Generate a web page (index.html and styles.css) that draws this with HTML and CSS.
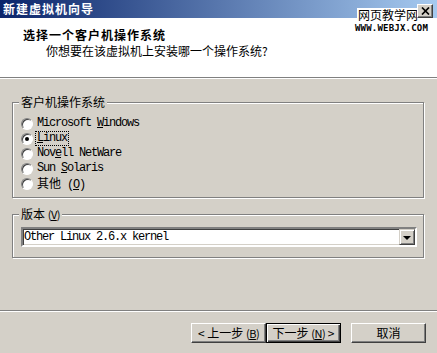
FILE: index.html
```html
<!DOCTYPE html>
<html lang="zh-CN">
<head>
  <meta charset="UTF-8" />
  <title>新建虚拟机向导</title>
  <link rel="stylesheet" href="styles.css">
</head>
<body>

  <div class="titlebar">
    <span class="title">新建虚拟机向导</span>
    <button class="close-btn">
      <svg width="9" height="8" viewBox="0 0 9 8"><path d="M1 0.5 L8 7.5 M8 0.5 L1 7.5" stroke="#000" stroke-width="1.7" fill="none"/></svg>
    </button>
  </div>

  <div class="watermark">
    <div class="wm-name">网页教学网</div>
    <div class="wm-url">WWW.WEBJX.COM</div>
  </div>

  <div class="header">
    <h1>选择一个客户机操作系统</h1>
    <p>你想要在该虚拟机上安装哪一个操作系统?</p>
  </div>

  <div class="main">
    <fieldset class="group">
      <legend>客户机操作系统</legend>
      <div class="opt"><span class="radio"></span><span class="lbl">Microsoft <u>W</u>indows</span></div>
      <div class="opt"><span class="radio checked"></span><span class="lbl focus"><u>L</u>inux</span></div>
      <div class="opt"><span class="radio"></span><span class="lbl">Nov<u>e</u>ll NetWare</span></div>
      <div class="opt"><span class="radio"></span><span class="lbl">Sun <u>S</u>olaris</span></div>
      <div class="opt"><span class="radio"></span><span class="lbl"><span class="cjk">其他</span> (<u>O</u>)</span></div>
    </fieldset>

    <fieldset class="group version">
      <legend>版本 <span class="key">(<u>V</u>)</span></legend>
      <div class="select">
        <span class="value">Other Linux 2.6.x kernel</span>
        <span class="drop"><span class="arrow"></span></span>
      </div>
    </fieldset>
  </div>

  <div class="separator"></div>

  <div class="buttons">
    <button class="btn">&lt; 上一步 <span class="key">(<u>B</u>)</span></button>
    <button class="btn default">下一步 <span class="key">(<u>N</u>)</span> &gt;</button>
    <button class="btn cancel">取消</button>
  </div>

</body>
</html>
```

FILE: styles.css
```css
* { box-sizing: border-box; }
body {
  margin: 0;
  width: 437px;
  height: 353px;
  overflow: hidden;
  position: relative;
  background: #d4d0c8;
  font-family: "Noto Sans CJK SC", sans-serif;
  font-size: 12px;
  color: #000;
}
.titlebar {
  height: 18px;
  display: flex;
  align-items: center;
  padding: 0 4px 0 3px;
  background: linear-gradient(to right, #0a246a, #a6caf0);
}
.title {
  color: #fff;
  font-weight: bold;
  letter-spacing: 1px;
  line-height: 18px;
}
.close-btn {
  margin-left: auto;
  margin-top: 4px;
  width: 16px;
  height: 14px;
  padding: 0;
  display: flex;
  align-items: center;
  justify-content: center;
  background: #d4d0c8;
  border: 1px solid;
  border-color: #fff #404040 #404040 #fff;
  box-shadow: inset -1px -1px #808080;
  position: relative;
  z-index: 2;
}
.watermark {
  position: absolute;
  top: 8px;
  left: 355px;
  width: 73px;
  z-index: 1;
}
.wm-name {
  width: 62px;
  margin-left: 2px;
  background: #fff;
  font-size: 12px;
  line-height: 14px;
  text-align: center;
}
.wm-url {
  margin-top: 1px;
  font-family: "DejaVu Sans Mono", monospace;
  font-weight: bold;
  font-size: 9px;
  line-height: 10px;
  letter-spacing: 0.2px;
}
.header {
  height: 60px;
  background: #fff;
  border-bottom: 1px solid #808080;
  box-shadow: 0 1px 0 #fff;
  padding: 10px 0 0 23px;
}
.header h1 {
  margin: 0;
  font-size: 12px;
  font-weight: bold;
  line-height: 14px;
  letter-spacing: 1px;
}
.header p {
  margin: 2px 0 0 23px;
  line-height: 14px;
}
.main {
  padding: 0 13px 0 12px;
}
.group {
  margin: 17px 0 0;
  padding: 7px 6px 6px 8px;
  min-width: 0;
  border: 1px solid #808080;
  box-shadow: inset 1px 1px 0 #fff, 1px 1px 0 #fff;
}
.group legend {
  margin-left: -2px;
  padding: 0 2px;
  line-height: 14px;
  background: #d4d0c8;
}
.version {
  margin-top: 9px;
  padding: 6px 6px 10px 8px;
}
.opt {
  display: flex;
  align-items: center;
  height: 15px;
}
.radio {
  width: 12px;
  height: 12px;
  margin-right: 4px;
  border-radius: 50%;
  background: #fff;
  border: 1px solid;
  border-color: #808080 #fff #fff #808080;
  box-shadow: inset 1px 1px 0 #404040;
  display: flex;
  align-items: center;
  justify-content: center;
}
.radio.checked::after {
  content: "";
  width: 4px;
  height: 4px;
  border-radius: 50%;
  background: #000;
}
.lbl, .value {
  font-family: "Liberation Mono", monospace;
  font-size: 12px;
  letter-spacing: -1.2px;
  line-height: 13px;
  white-space: pre;
}
.lbl .cjk {
  font-family: "Noto Sans CJK SC", sans-serif;
  letter-spacing: 0;
}
.focus {
  outline: 1px dotted #000;
  padding: 0 1px;
  margin-left: -1px;
}
.key {
  font-size: 11px;
  letter-spacing: -0.5px;
}
.select {
  height: 20px;
  display: flex;
  align-items: center;
  background: #fff;
  border: 2px solid;
  border-color: #808080 #fff #fff #808080;
  box-shadow: inset 1px 1px 0 #404040, inset -1px -1px 0 #d4d0c8;
  padding-left: 1px;
}
.select .value {
  flex: 1;
}
.drop {
  width: 16px;
  height: 16px;
  display: flex;
  align-items: center;
  justify-content: center;
  background: #d4d0c8;
  border: 1px solid;
  border-color: #d4d0c8 #404040 #404040 #d4d0c8;
  box-shadow: inset 1px 1px #fff, inset -1px -1px #808080;
}
.arrow {
  width: 0;
  height: 0;
  border-left: 4px solid transparent;
  border-right: 4px solid transparent;
  border-top: 4px solid #000;
  margin-top: 1px;
}
.separator {
  margin-top: 52px;
  height: 2px;
  border-top: 1px solid #808080;
  border-bottom: 1px solid #fff;
}
.buttons {
  display: flex;
  justify-content: flex-end;
  margin-top: 11px;
  padding-right: 11px;
}
.btn {
  width: 75px;
  height: 20px;
  padding: 0;
  font-family: "Noto Sans CJK SC", sans-serif;
  font-size: 12px;
  line-height: 16px;
  color: #000;
  background: #d4d0c8;
  border: 1px solid;
  border-color: #fff #404040 #404040 #fff;
  box-shadow: inset -1px -1px #808080;
  white-space: nowrap;
}
.btn.default {
  border-color: #000;
  box-shadow: inset 1px 1px #fff, inset -1px -1px #404040, inset -2px -2px #808080;
}
.btn.cancel {
  margin-left: 10px;
}
```
